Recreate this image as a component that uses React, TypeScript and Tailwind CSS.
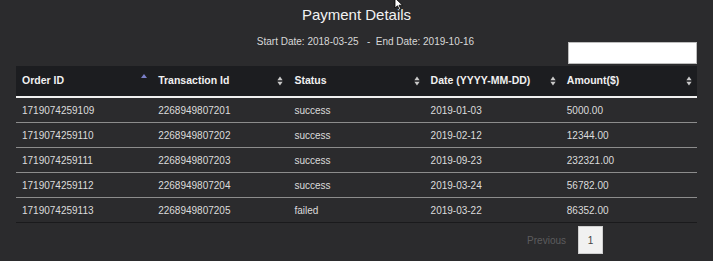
const rows = [
  ["1719074259109", "2268949807201", "success", "2019-01-03", "5000.00"],
  ["1719074259110", "2268949807202", "success", "2019-02-12", "12344.00"],
  ["1719074259111", "2268949807203", "success", "2019-09-23", "232321.00"],
  ["1719074259112", "2268949807204", "success", "2019-03-24", "56782.00"],
  ["1719074259113", "2268949807205", "failed", "2019-03-22", "86352.00"],
];

const headers = ["Order ID", "Transaction Id", "Status", "Date (YYYY-MM-DD)", "Amount($)"];

function SortIcon({ active }: { active?: boolean }) {
  if (active) {
    return (
      <svg width="6" height="10" viewBox="0 0 6 10" className="mb-[6px]">
        <path d="M3 1 L6 5 L0 5 Z" fill="#7b7fc8" />
      </svg>
    );
  }
  return (
    <svg width="6" height="10" viewBox="0 0 6 10">
      <path d="M3 0.5 L5.6 4.2 L0.4 4.2 Z" fill="#c9c9c9" />
      <path d="M3 9.5 L5.6 5.8 L0.4 5.8 Z" fill="#c9c9c9" />
    </svg>
  );
}

export default function App() {
  return (
    <div
      className="relative w-[713px] h-[261px] overflow-hidden bg-[#2b2b2d] text-[#e6e6e6]"
      style={{ fontFamily: '"Liberation Sans", Arial, sans-serif' }}
    >
      {/* mouse pointer in the capture */}
      <svg width="10" height="14" viewBox="0 0 10 14" className="absolute left-[394px] top-[-3px]">
        <path d="M1 1 L1 11 L3.5 8.8 L5.5 13 L7 12.3 L5 8.2 L8.5 8.2 Z" fill="#ffffff" stroke="#000" strokeWidth="0.8" />
      </svg>

      <h1 className="pt-[5px] text-center text-[15px] leading-[20px] text-[#f2f2f2]">Payment Details</h1>
      <p className="mt-[11px] pl-[18px] text-center text-[10px] leading-[12px] text-[#d8d8d8]">
        Start Date: 2018-03-25&nbsp;&nbsp;&nbsp;-&nbsp;&nbsp;End Date: 2019-10-16
      </p>

      <div className="flex justify-end px-[16px] -mt-[6px]">
        <div className="w-[129px] h-[22px] bg-white border border-[#bdbdbd]" />
      </div>

      <div className="mx-[16px] mt-[2px]">
        <div className="grid grid-cols-5 h-[32px] bg-[#1c1d20] border-b-2 border-[#f0f0f0]">
          {headers.map((h, i) => (
            <div key={h} className="flex items-center justify-between pl-[6px] pr-[5px]">
              <span className="text-[10.5px] font-bold text-[#f0f0f0]">{h}</span>
              <SortIcon active={i === 0} />
            </div>
          ))}
        </div>
        {rows.map((r, ri) => (
          <div
            key={ri}
            className={`grid grid-cols-5 h-[25px] border-b ${ri === rows.length - 1 ? "border-[#1a1a1c]" : "border-[#8c8c8c]"}`}
          >
            {r.map((c, ci) => (
              <div key={ci} className="flex items-center pl-[6px] text-[10px] text-[#dcdcdc]">
                {c}
              </div>
            ))}
          </div>
        ))}
      </div>

      <div className="flex justify-end items-center pr-[110px] mt-[3px]">
        <span className="text-[10px] text-[#5c5c5e] mr-[12px]">Previous</span>
        <div className="w-[25px] h-[28px] flex items-center justify-center bg-[#f1f1f1] border border-[#cfcfcf] text-[10px] text-[#444]">
          1
        </div>
      </div>
    </div>
  );
}
